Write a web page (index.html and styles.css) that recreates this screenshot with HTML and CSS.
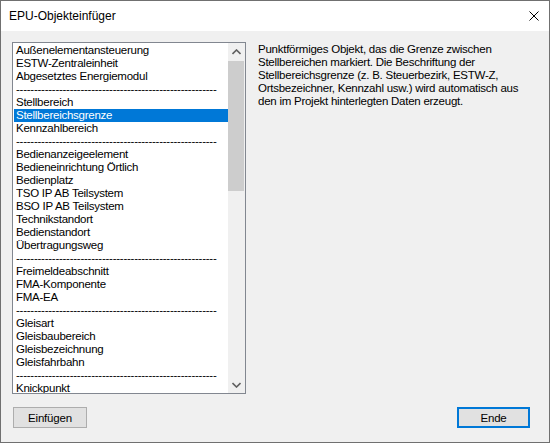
FILE: index.html
```html
<!DOCTYPE html>
<html>
<head>
	<title>EPU-Objekteinfüger</title>
	<link rel="stylesheet" href="styles.css">
</head>
<body>
	<div class="window">
		<div class="titlebar">
			<span class="title">EPU-Objekteinfüger</span>
			<svg class="close" width="10" height="10" viewBox="0 0 10 10">
				<path d="M0.5 0.5 L9.5 9.5 M9.5 0.5 L0.5 9.5" stroke="#000" stroke-width="1" fill="none"/>
			</svg>
		</div>

		<div class="content">
			<div class="listbox">
				<ul class="items">
					<li>Außenelementansteuerung</li>
					<li>ESTW-Zentraleinheit</li>
					<li>Abgesetztes Energiemodul</li>
					<li class="sep">--------------------------------------------------------</li>
					<li>Stellbereich</li>
					<li class="selected">Stellbereichsgrenze</li>
					<li>Kennzahlbereich</li>
					<li class="sep">--------------------------------------------------------</li>
					<li>Bedienanzeigeelement</li>
					<li>Bedieneinrichtung Örtlich</li>
					<li>Bedienplatz</li>
					<li>TSO IP AB Teilsystem</li>
					<li>BSO IP AB Teilsystem</li>
					<li>Technikstandort</li>
					<li>Bedienstandort</li>
					<li>Übertragungsweg</li>
					<li class="sep">--------------------------------------------------------</li>
					<li>Freimeldeabschnitt</li>
					<li>FMA-Komponente</li>
					<li>FMA-EA</li>
					<li class="sep">--------------------------------------------------------</li>
					<li>Gleisart</li>
					<li>Gleisbaubereich</li>
					<li>Gleisbezeichnung</li>
					<li>Gleisfahrbahn</li>
					<li class="sep">--------------------------------------------------------</li>
					<li>Knickpunkt</li>
				</ul>
				<div class="scrollbar">
					<div class="arrow">
						<svg width="9" height="6" viewBox="0 0 9 6"><path d="M0.5 5 L4.5 1 L8.5 5" stroke="#606060" stroke-width="1.6" fill="none"/></svg>
					</div>
					<div class="track">
						<div class="thumb"></div>
					</div>
					<div class="arrow">
						<svg width="9" height="6" viewBox="0 0 9 6"><path d="M0.5 1 L4.5 5 L8.5 1" stroke="#606060" stroke-width="1.6" fill="none"/></svg>
					</div>
				</div>
			</div>

			<p class="description">
				Punktförmiges Objekt, das die Grenze zwischen<br>
				Stellbereichen markiert. Die Beschriftung der<br>
				Stellbereichsgrenze (z. B. Steuerbezirk, ESTW-Z,<br>
				Ortsbezeichner, Kennzahl usw.) wird automatisch aus<br>
				den im Projekt hinterlegten Daten erzeugt.
			</p>
		</div>

		<div class="buttons">
			<button class="btn">Einfügen</button>
			<button class="btn default">Ende</button>
		</div>
	</div>
</body>
</html>
```

FILE: styles.css
```css
/* Dialog window */

html, body { margin: 0; padding: 0; }
body { font-family: "Liberation Sans", Arial, sans-serif; font-size: 11.5px; letter-spacing: -0.25px; color: #000; }

.window { width: 550px; height: 443px; box-sizing: border-box; border: 1px solid #707070; background: #f0f0f0; display: flex; flex-direction: column; }

.titlebar { height: 30px; background: #fff; display: flex; align-items: center; justify-content: space-between; padding: 0 10px 0 8px; }
.title { font-size: 12px; letter-spacing: 0; }
.close { display: block; }

.content { display: flex; padding: 11px 0 0 11px; height: 352px; }

/* List box */
.listbox { width: 234px; height: 352px; box-sizing: border-box; border: 1px solid #828790; background: #fff; display: flex; overflow: hidden; }
.items { list-style: none; margin: 0; padding: 1px 0 0 1px; width: 215px; box-sizing: border-box; overflow: hidden; }
.items li { height: 13px; line-height: 13px; padding-left: 2px; white-space: nowrap; }
.items li.selected { background: #0078d7; color: #fff; }

.scrollbar { width: 17px; background: #f0f0f0; display: flex; flex-direction: column; }
.arrow { height: 17px; display: flex; align-items: center; justify-content: center; }
.track { flex: 1; }
.thumb { height: 130px; margin: 1px 1px 0 0; background: #cdcdcd; }

/* Description */
.description { margin: 1px 0 0 12px; line-height: 13px; white-space: nowrap; }

/* Buttons */
.buttons { display: flex; justify-content: space-between; padding: 13px 19px 0 12px; }
.btn { font-family: inherit; font-size: 11.5px; letter-spacing: -0.2px; height: 21px; width: 74px; background: #e1e1e1; border: 1px solid #adadad; padding: 0; color: #000; }
.btn.default { width: 73px; border: 2px solid #0078d7; }
```
